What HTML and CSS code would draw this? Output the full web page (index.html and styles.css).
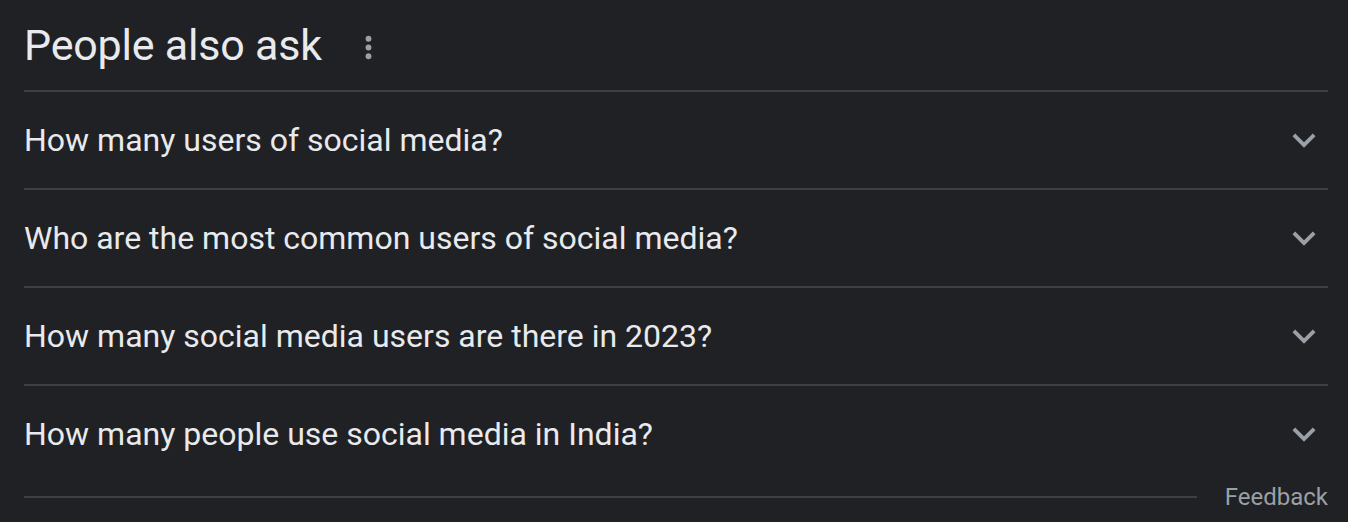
FILE: index.html
```html
<!DOCTYPE html>
<html lang="en">
<head>
<meta charset="utf-8">
<title>People also ask</title>
<link rel="stylesheet" href="styles.css">
</head>
<body>
<div class="paa">
  <div class="paa-header">
    <h2 class="paa-title">People also ask</h2>
    <svg class="more-icon" viewBox="0 0 24 24" aria-hidden="true"><circle cx="12" cy="6" r="2"/><circle cx="12" cy="12" r="2"/><circle cx="12" cy="18" r="2"/></svg>
  </div>
  <div class="paa-row">
    <span class="q">How many users of social media?</span>
    <svg class="chev" viewBox="0 0 24 24" aria-hidden="true"><path d="M16.59 8.59L12 13.17 7.41 8.59 6 10l6 6 6-6z"/></svg>
  </div>
  <div class="paa-row">
    <span class="q">Who are the most common users of social media?</span>
    <svg class="chev" viewBox="0 0 24 24" aria-hidden="true"><path d="M16.59 8.59L12 13.17 7.41 8.59 6 10l6 6 6-6z"/></svg>
  </div>
  <div class="paa-row">
    <span class="q">How many social media users are there in 2023?</span>
    <svg class="chev" viewBox="0 0 24 24" aria-hidden="true"><path d="M16.59 8.59L12 13.17 7.41 8.59 6 10l6 6 6-6z"/></svg>
  </div>
  <div class="paa-row paa-row-last">
    <span class="q">How many people use social media in India?</span>
    <svg class="chev" viewBox="0 0 24 24" aria-hidden="true"><path d="M16.59 8.59L12 13.17 7.41 8.59 6 10l6 6 6-6z"/></svg>
  </div>
  <div class="paa-footer">
    <div class="foot-line"></div>
    <span class="feedback">Feedback</span>
  </div>
</div>
</body>
</html>
```
FILE: styles.css
```css
html, body {
  margin: 0;
  padding: 0;
  background: #202124;
}
body {
  font-family: Roboto, "Liberation Sans", Arial, sans-serif;
  color: #e8eaed;
}
.paa {
  padding: 0 20px 0 24px;
}
.paa-header {
  display: flex;
  align-items: center;
  height: 90px;
  border-bottom: 2px solid #3c4043;
}
.paa-title {
  margin: 0;
  font-size: 43px;
  font-weight: 400;
  line-height: 52px;
  color: #e8eaed;
  letter-spacing: -0.2px;
}
.more-icon {
  width: 35px;
  height: 35px;
  margin-left: 29px;
  margin-top: 4px;
  fill: #9aa0a6;
}
.paa-row {
  display: flex;
  align-items: center;
  justify-content: space-between;
  height: 96px;
  border-bottom: 2px solid #3c4043;
}
.paa-row-last {
  border-bottom: none;
}
.q {
  font-size: 32px;
  line-height: 40px;
  color: #e8eaed;
}
.chev {
  width: 46px;
  height: 46px;
  margin-right: 1px;
  fill: #9aa0a6;
}
.paa-footer {
  display: flex;
  align-items: center;
  height: 30px;
}
.foot-line {
  flex: 1;
  height: 2px;
  background: #3c4043;
  margin-right: 28px;
}
.feedback {
  font-size: 24px;
  color: #9aa0a6;
}
```
